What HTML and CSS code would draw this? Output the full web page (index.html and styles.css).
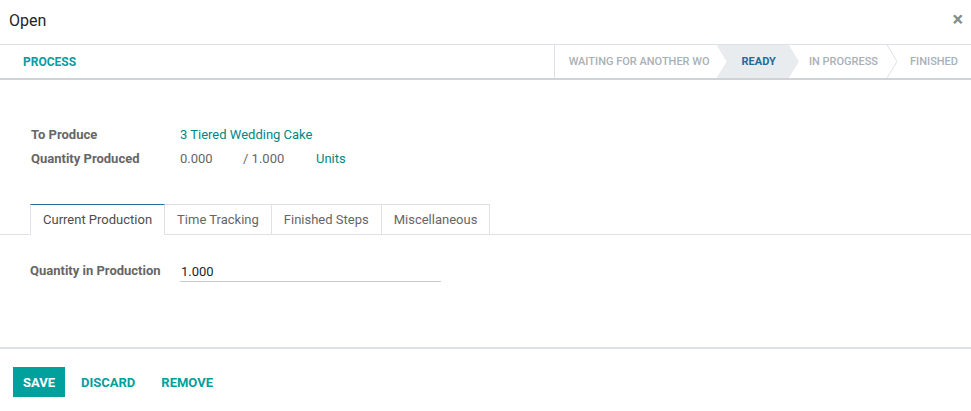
FILE: index.html
```html
<!DOCTYPE html>
<html lang="en">
<head>
    <meta charset="UTF-8">
    <title>Open</title>
    <link rel="stylesheet" href="styles.css">
</head>
<body>
    <div class="modal-header">
        <h4 class="modal-title">Open</h4>
        <button class="close" type="button">×</button>
    </div>

    <div class="statusbar">
        <div class="statusbar-buttons">
            <button class="btn-link" type="button">Process</button>
        </div>
        <div class="statusbar-status">
            <span class="status-item first">Waiting for another WO</span>
            <span class="status-item active">Ready</span>
            <span class="status-item chevron">In Progress
                <svg class="chev" width="10" height="33" viewBox="0 0 10 33"><polyline points="0,0 10,16.5 0,33" fill="none" stroke="#dee2e6" stroke-width="1"/></svg>
            </span>
            <span class="status-item last">Finished</span>
        </div>
    </div>

    <div class="sheet">
        <div class="info">
            <div class="row">
                <label class="label">To Produce</label>
                <a class="link" href="#">3 Tiered Wedding Cake</a>
            </div>
            <div class="row">
                <label class="label">Quantity Produced</label>
                <span class="qty">0.000</span>
                <span class="qty-total">/ 1.000</span>
                <a class="link" href="#">Units</a>
            </div>
        </div>

        <ul class="tabs">
            <li class="tab active">Current Production</li>
            <li class="tab">Time Tracking</li>
            <li class="tab">Finished Steps</li>
            <li class="tab">Miscellaneous</li>
        </ul>

        <div class="tab-pane">
            <div class="row">
                <label class="label">Quantity in Production</label>
                <input class="field" type="text" value="1.000">
            </div>
        </div>
    </div>

    <div class="modal-footer">
        <button class="btn-primary" type="button">Save</button>
        <button class="btn-link" type="button">Discard</button>
        <button class="btn-link" type="button">Remove</button>
    </div>
</body>
</html>
```

FILE: styles.css
```css
html, body {
    height: 100%;
}

body {
    margin: 0;
    font-family: Roboto, "Noto Sans", sans-serif;
    font-size: 13px;
    color: #4c4c4c;
    background-color: #fff;
    display: flex;
    flex-direction: column;
}

button {
    font-family: inherit;
    border: none;
    background: none;
    cursor: pointer;
}

/* En-tête de la fenêtre */
.modal-header {
    height: 44px;
    display: flex;
    align-items: center;
    justify-content: space-between;
    border-bottom: 1px solid #dee2e6;
    padding: 0 9px;
}

.modal-title {
    margin: 0;
    font-size: 16px;
    font-weight: 400;
    color: #212529;
    padding-bottom: 4px;
}

.close {
    font-size: 20px;
    font-weight: 700;
    color: #8a8a8a;
    padding: 0;
    margin-top: -6px;
    margin-right: -1px;
}

/* Barre de statut */
.statusbar {
    height: 33px;
    display: flex;
    justify-content: space-between;
    border-bottom: 2px solid #cfd3d8;
}

.statusbar-buttons {
    display: flex;
    align-items: center;
    padding-left: 13px;
}

.btn-link {
    color: #00A09D;
    font-weight: 700;
    font-size: 13px;
    text-transform: uppercase;
    padding: 0 10px;
    height: 30px;
    margin-right: 6px;
}

.statusbar-buttons .btn-link {
    font-size: 12px;
}

.statusbar-status {
    display: flex;
    border-left: 1px solid #dee2e6;
}

.status-item {
    position: relative;
    display: flex;
    align-items: center;
    font-size: 11px;
    font-weight: 500;
    text-transform: uppercase;
    color: #a9b0b7;
    white-space: nowrap;
}

.status-item.first {
    padding: 0 7px 0 14px;
}

.status-item.active {
    color: #1f6a9a;
    font-weight: 700;
    background-color: #e9ecef;
    padding: 0 23px 0 25px;
    clip-path: polygon(0 0, calc(100% - 10px) 0, 100% 50%, calc(100% - 10px) 100%, 0 100%, 10px 50%);
}

.status-item.chevron {
    padding: 0 19px 0 10px;
}

.chev {
    position: absolute;
    right: 0;
    top: 0;
}

.status-item.last {
    padding: 0 13px 0 13px;
}

/* Feuille du formulaire */
.sheet {
    flex: 1;
    padding-top: 42px;
}

.info {
    padding-left: 31px;
}

.row {
    display: flex;
    align-items: center;
    height: 24px;
}

.label {
    width: 149px;
    font-weight: 700;
    color: #666;
}

.link {
    color: #008784;
    text-decoration: none;
}

.qty {
    width: 63px;
    color: #666;
}

.qty-total {
    width: 73px;
    color: #666;
}

/* Onglets */
.tabs {
    list-style: none;
    margin: 34px 0 0;
    padding: 0 0 0 30px;
    display: flex;
    border-bottom: 1px solid #dee2e6;
}

.tab {
    height: 29px;
    line-height: 29px;
    padding: 0 12px;
    border: 1px solid #dee2e6;
    border-left: none;
    margin-bottom: -1px;
    color: #666;
}

.tab.active {
    border-left: 1px solid #dee2e6;
    border-top-color: #2a6f9b;
    border-bottom-color: #fff;
    color: #4c4c4c;
}

.tab-pane {
    padding: 23px 0 0 30px;
}

.field {
    width: 261px;
    box-sizing: border-box;
    border: none;
    border-bottom: 1px solid #ccc;
    font-family: inherit;
    font-size: 13px;
    color: #212529;
    padding: 4px 0 2px 1px;
    margin-top: 2px;
    margin-left: 1px;
    outline: none;
}

/* Pied de la fenêtre */
.modal-footer {
    border-top: 2px solid #dde1e5;
    display: flex;
    align-items: flex-start;
    padding: 18px 0 0 13px;
    box-sizing: border-box;
    height: 64px;
}

.btn-primary {
    background-color: #00A09D;
    color: #fff;
    font-weight: 700;
    font-size: 13px;
    text-transform: uppercase;
    padding: 0 10px;
    height: 30px;
    margin-right: 6px;
}
```
